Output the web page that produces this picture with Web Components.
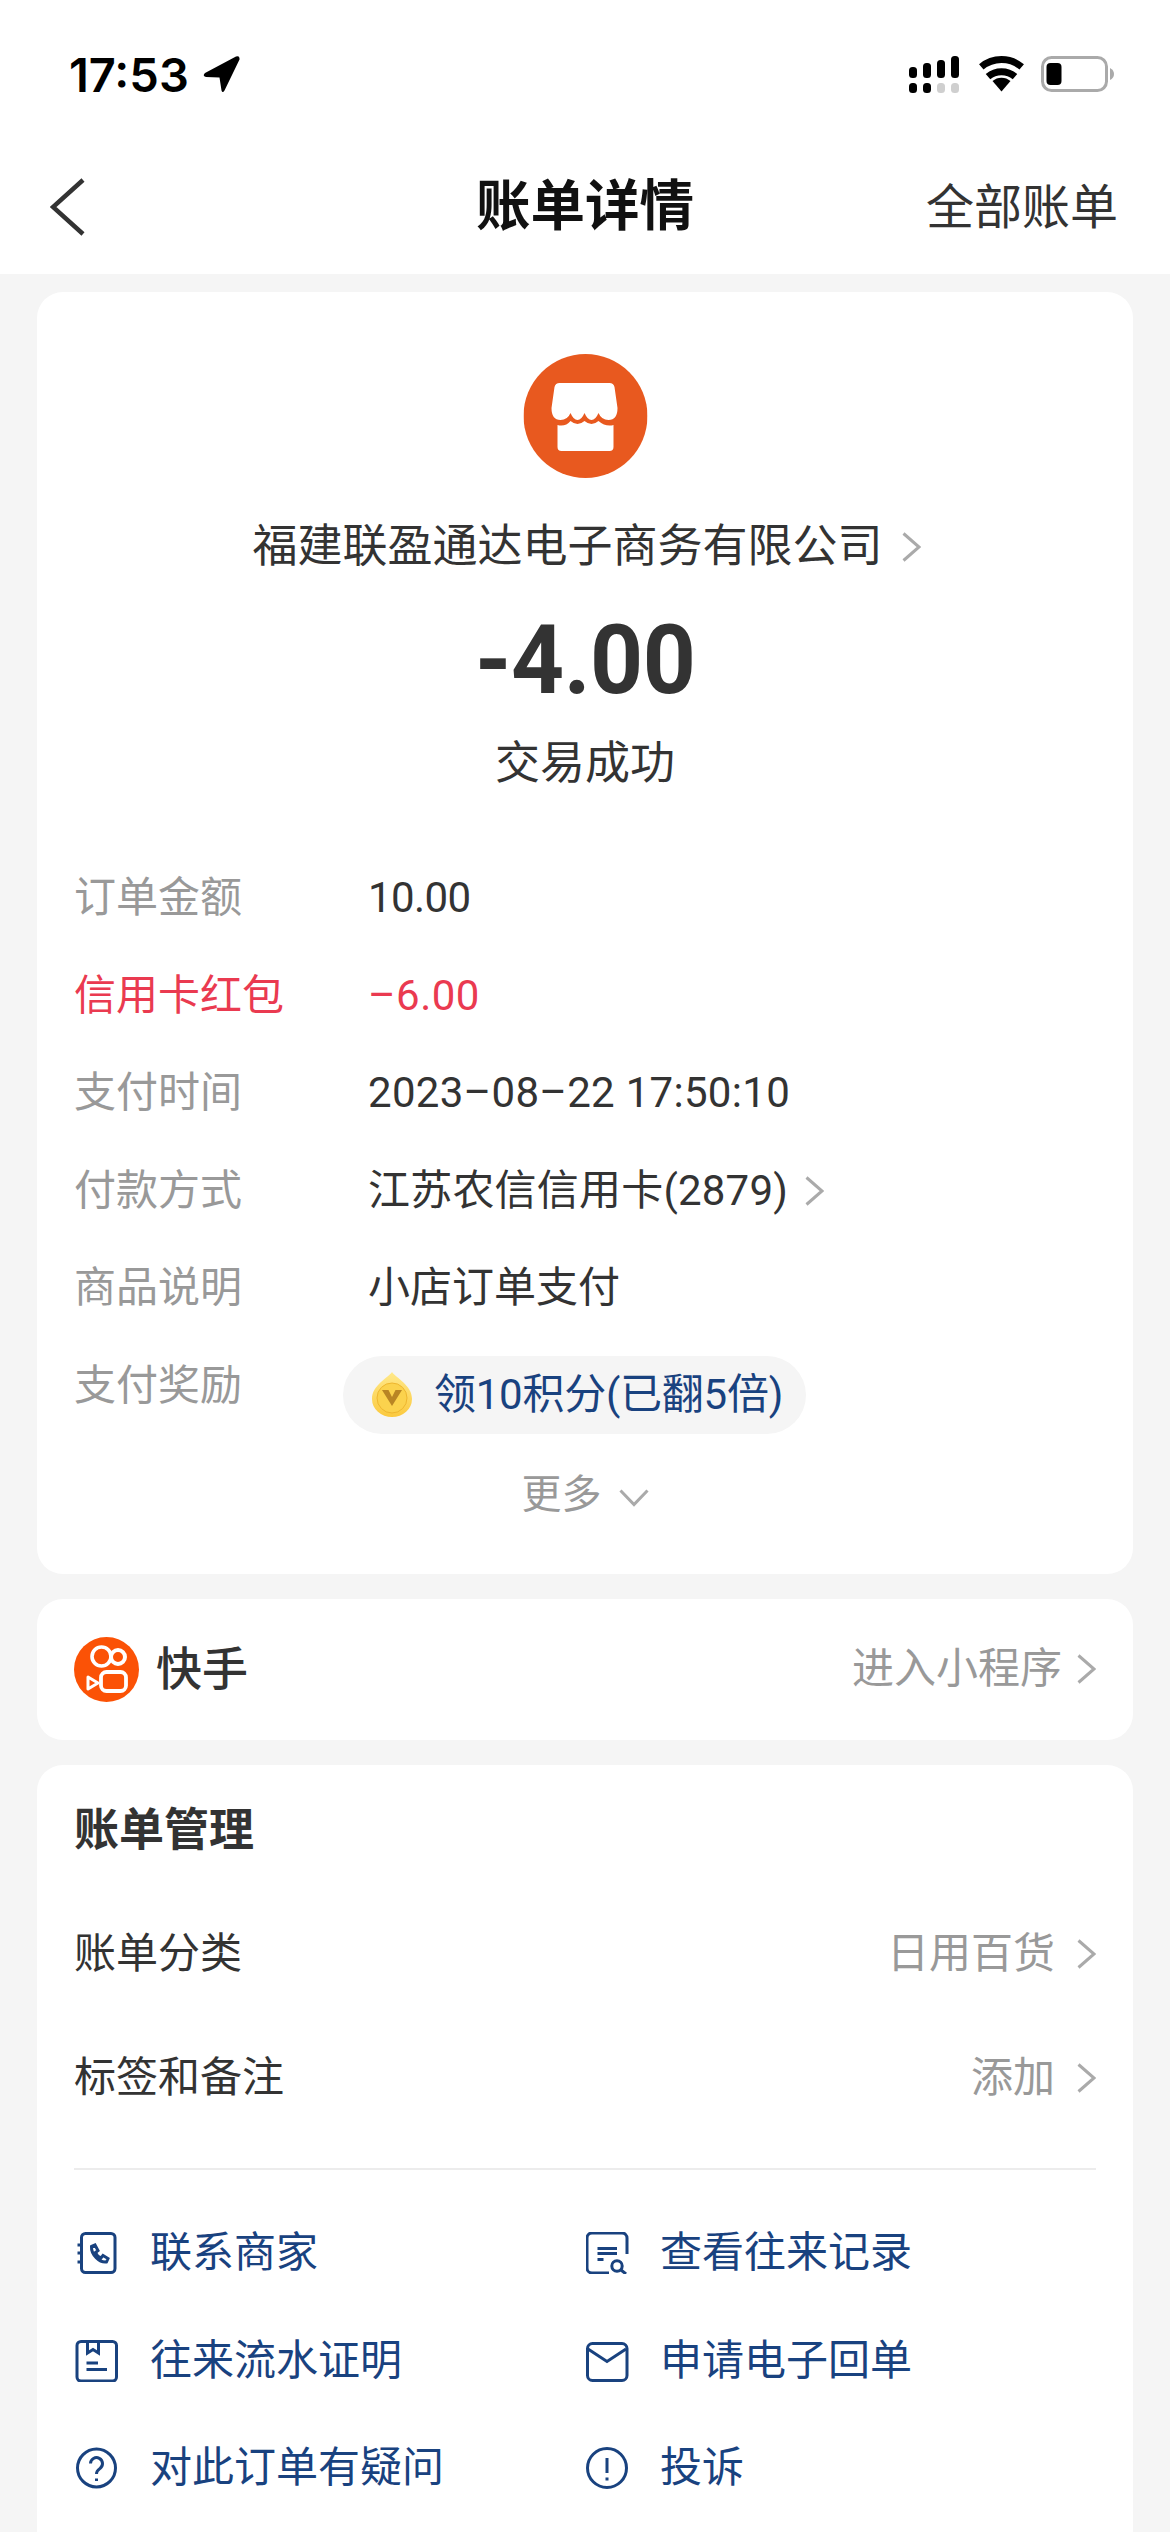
<!DOCTYPE html>
<html lang="zh-CN"><head><meta charset="utf-8"><title>账单详情</title>
<style>
html,body{margin:0;padding:0;width:1170px;height:2532px;overflow:hidden;background:#f5f5f5;}
body{font-family:Roboto,"Noto Sans CJK SC",sans-serif;color:#333;}
</style></head><body>
<bill-app>
  <status-bar></status-bar>
  <nav-bar>账单详情<span slot="right">全部账单</span></nav-bar>
  <bill-card class="c1">
    <merchant-head name="福建联盈通达电子商务有限公司" amount="-4.00" status="交易成功"></merchant-head>
    <kv-row label="订单金额"><span style="letter-spacing:-.6px">10.00</span></kv-row>
    <kv-row label="信用卡红包" tone="red"><span style="letter-spacing:.5px">–6.00</span></kv-row>
    <kv-row label="支付时间"><span style="letter-spacing:.3px">2023–08–22 17:50:10</span></kv-row>
    <kv-row label="付款方式"><span style="letter-spacing:.2px">江苏农信信用卡(2879)</span><chev-icon style="margin-left:16px"></chev-icon></kv-row>
    <kv-row label="商品说明">小店订单支付</kv-row>
    <kv-row label="支付奖励"><reward-pill>领10积分(已翻5倍)</reward-pill></kv-row>
    <more-toggle>更多</more-toggle>
  </bill-card>
  <mini-app-card name="快手" action="进入小程序"></mini-app-card>
  <bill-card class="c3">
    <section-title>账单管理</section-title>
    <manage-row label="账单分类">日用百货</manage-row>
    <manage-row label="标签和备注">添加</manage-row>
    <h-rule></h-rule>
    <action-grid>
      <action-link icon="phone">联系商家</action-link>
      <action-link icon="search" style="gap:30px">查看往来记录</action-link>
      <action-link icon="book">往来流水证明</action-link>
      <action-link icon="mail" style="gap:30px">申请电子回单</action-link>
      <action-link icon="help">对此订单有疑问</action-link>
      <action-link icon="alert" style="gap:30px">投诉</action-link>
    </action-grid>
  </bill-card>
</bill-app>
<script>
const FONT='Roboto,"Noto Sans CJK SC",sans-serif';
function def(name,html){
  customElements.define(name,class extends HTMLElement{
    connectedCallback(){
      if(this.shadowRoot)return;
      const r=this.attachShadow({mode:'open'});
      r.innerHTML=typeof html==='function'?html(this):html;
    }
  });
}
def('bill-app',`<style>:host{display:flex;flex-direction:column;width:1170px;height:2532px;overflow:hidden}
::slotted(*){flex:none}
</style><slot></slot>`);
def('status-bar',`<style>:host{display:flex;justify-content:space-between;align-items:flex-start;height:137px;box-sizing:border-box;padding:56px 55px 0 69px;background:#fff}
.t{display:flex;align-items:center;gap:14px;font:600 47px/37px Inter,sans-serif;color:#000;letter-spacing:0}
svg{display:block}.r{display:flex;gap:16px;align-items:flex-start}
</style>
<div class="t">17:53<svg width="38" height="37" viewBox="0 0 38 37"><path d="M33 .6L2 17Q-1 20 3 21L16.500 21.500L18.500 34.500Q19.500 37.500 21.500 34.500L36.500 3.500Q37 -.6 33 .6Z" fill="#000"/></svg></div>
<div class="r">
<svg width="53" height="37" viewBox="0 0 53 37" fill="#000"><rect x="1" y="11" width="8" height="11" rx="3.500"/><rect x="15" y="7" width="8" height="15" rx="3.500"/><rect x="29" y="4" width="8" height="18" rx="3.500"/><rect x="43" y="0" width="8" height="22" rx="3.500"/><rect x="1" y="27" width="8" height="10" rx="3.500"/><rect x="15" y="27" width="8" height="10" rx="3.500"/><rect x="29" y="27" width="8" height="10" rx="3.500" fill="#cfcfcf"/><rect x="43" y="27" width="8" height="10" rx="3.500" fill="#cfcfcf"/></svg>
<svg width="49" height="36" viewBox="0 0 49 36"><path d="M4.300 10.900A31.500 31.500 0 0 1 44.700 10.900M11 20.600A21 21 0 0 1 38 20.600" fill="none" stroke="#000" stroke-width="7"/><path d="M24.500 35.500L15.500 25A13.700 13.700 0 0 1 33.500 25Z" fill="#000"/></svg>
<svg width="74" height="37" viewBox="0 0 74 37" style="margin-left:-1px"><rect x="1.500" y="1.500" width="64" height="33" rx="9" fill="#fff" stroke="#aaa" stroke-width="3"/><rect x="5.500" y="7" width="15" height="22" rx="4" fill="#000"/><path d="M69 12q4 2 4 6t-4 6z" fill="#aaa"/></svg>
</div>`);
def('nav-bar',`<style>:host{display:flex;align-items:center;justify-content:center;position:relative;height:137px;background:#fff;box-sizing:border-box;font:600 54.500px/70px ${FONT};color:#111}
svg{position:absolute;left:50px;top:41px}
.r{position:absolute;right:52px;top:36px;font:400 48px/70px ${FONT};color:#333}
</style><svg width="36" height="58" viewBox="0 0 36 58"><path d="M33 2L3 29L33 56" fill="none" stroke="#333" stroke-width="4.500"/></svg><div><slot></slot></div><div class="r"><slot name="right"></slot></div>`);
def('bill-card',`<style>:host{display:block;box-sizing:border-box;margin:0 37px;width:1096px;background:#fff;border-radius:26px;padding:0 37px}
:host(.c1){margin-top:18px;padding-top:62px;padding-bottom:49px}
:host(.c3){margin-top:25px;padding-top:36px;height:900px}
</style><slot></slot>`);
def('merchant-head',h=>`<style>:host{display:block;text-align:center;margin-bottom:55px;color:#333}
.logo{display:block;margin:0 auto 35px;width:124px;height:124px;transform:translateX(.5px)}
.n{display:flex;justify-content:center;align-items:center;gap:18px;height:68px;font:400 45px/68px ${FONT};padding-left:3px}
.a{height:110px;margin-top:24px;font:700 96px/110px Roboto,sans-serif;color:#333}
.a span{display:inline-block;transform:scaleX(.965);letter-spacing:-.5px}
.s{height:60px;margin-top:19px;font:400 45px/60px ${FONT}}
</style>
<svg class="logo" viewBox="0 0 124 124"><circle cx="62" cy="62" r="62" fill="#e8591f"/><path fill="#fff" d="M36 29H86Q90 29 91 33L94 54Q94 66 85 66Q78 66 75 59Q72 66 68 66Q64 66 61 59Q58 66 54 66Q50 66 47 59Q44 66 37 66Q28 66 28 54L31 33Q32 29 36 29Z"/><path fill="#fff" d="M34 71Q42 73 47 67Q54 73 61 67Q68 73 75 67Q82 73 90 71V93Q90 97 86 97H38Q34 97 34 93Z"/></svg>
<div class="n">${h.getAttribute('name')}<chev-icon size="lg"></chev-icon></div>
<div class="a"><span>${h.getAttribute('amount')}</span></div>
<div class="s">${h.getAttribute('status')}</div>`);
def('chev-icon',h=>{const d=h.getAttribute('dir');
 if(d==='down')return `<style>:host{display:inline-block;line-height:0}</style><svg width="30" height="18" viewBox="0 0 30 18"><path d="M1.500 1.500L15 15.500L28.500 1.500" fill="none" stroke="#aaa" stroke-width="3"/></svg>`;
 return `<style>:host{display:inline-flex;align-items:center;line-height:0}</style><svg width="20" height="30" viewBox="0 0 20 30"><path d="M2.500 1.500L18 15L2.500 28.500" fill="none" stroke="#aaa" stroke-width="3"/></svg>`});
def('kv-row',h=>{const red=h.getAttribute('tone')==='red';const c=red?'#ea3a50':null;return `<style>:host{display:flex;align-items:flex-start;min-height:97.6px;font:400 42px/97.6px ${FONT}}
.l{width:294px;flex:none;color:${c||'#999'}}.v{display:flex;align-items:center;color:${c||'#333'}}
</style><div class="l">${h.getAttribute('label')}</div><div class="v"><slot></slot></div>`});
def('reward-pill',`<style>:host{display:flex;align-items:center;box-sizing:border-box;height:78px;width:463px;margin:19px 0 0 -25px;padding:0 0 0 28px;background:#f5f5f5;border-radius:39px;font:400 42px/78px ${FONT};color:#19427f;gap:21px;letter-spacing:-.25px}
svg{display:block;flex:none}</style>
<svg width="42" height="45" viewBox="0 0 42 45"><defs><linearGradient id="g" x1="0" y1="0" x2="0" y2="1"><stop offset="0" stop-color="#ffe98a"/><stop offset="1" stop-color="#fbc93e"/></linearGradient></defs><path d="M21 0C25 6 41 13 41 27A20 18 0 0 1 1 27C1 13 17 6 21 0Z" fill="url(#g)"/><circle cx="21" cy="26" r="15" fill="#fbd24d" stroke="#eeb62f" stroke-width="1"/><path d="M11 18H17.500L21 25L24.500 18H31L21 34Z" fill="#b98524"/></svg><slot></slot>`);
def('more-toggle',`<style>:host{display:flex;justify-content:center;align-items:center;gap:17px;height:60px;margin-top:30px;font:400 40px/60px ${FONT};color:#999}
</style><slot></slot><chev-icon dir="down" style="margin-top:6px"></chev-icon>`);
def('mini-app-card',h=>`<style>:host{display:flex;align-items:center;box-sizing:border-box;margin:25px 37px 0;width:1096px;height:141px;padding:0 37px;background:#fff;border-radius:26px}
svg{display:block;flex:none}.n{margin-left:17px;font:500 46px/60px ${FONT};color:#333}
.a{margin-left:auto;font:400 42px/60px ${FONT};color:#999;margin-right:14px}
</style><svg width="65" height="65" viewBox="0 0 65 65"><circle cx="32.500" cy="32.500" r="32.500" fill="#fb5206"/><g fill="none" stroke="#fff"><circle cx="27.500" cy="19.500" r="9.500" stroke-width="3.600"/><circle cx="44" cy="20" r="7" stroke-width="4"/><rect x="27" y="35" width="25" height="19" rx="5.500" stroke-width="3.800"/><path d="M14 40L24 46L14 52Z" stroke-width="3" stroke-linejoin="round"/></g></svg><div class="n">${h.getAttribute('name')}</div><div class="a">${h.getAttribute('action')}</div><chev-icon></chev-icon>`);
def('section-title',`<style>:host{display:block;height:60px;margin-bottom:31px;font:600 45px/60px ${FONT};color:#333}</style><slot></slot>`);
def('manage-row',h=>`<style>:host{display:flex;align-items:center;height:124px;font:400 42px/60px ${FONT};color:#333}
.v{margin-left:auto;margin-right:21px;color:#999}</style><div>${h.getAttribute('label')}</div><div class="v"><slot></slot></div><chev-icon></chev-icon>`);
def('h-rule',`<style>:host{display:block;height:2px;margin-top:28px;background:#ececec}</style>`);
def('action-grid',`<style>:host{display:grid;grid-template-columns:512px 1fr;grid-auto-rows:107.5px;margin-top:30px}</style><slot></slot>`);
const ICONS={
phone:`<rect x="7.500" y="1.500" width="33.500" height="39" rx="4"/><path d="M3.500 13H8M3.500 21H8M3.500 30H8"/><path d="M17.500 14.500l3.500-1.500 3 5.500-2.500 2c1 2.500 3 4.500 5.500 5.500l2-2.500 5 3-1.500 3.500c-7 1-15.500-7.500-15-15.500z"/>`,
book:`<rect x="3" y="1.500" width="39.500" height="39.500" rx="4"/><path d="M13.500 1.500V13L19 9.500L24.500 13V1.500"/><path d="M12.500 23H24M12.500 29.500H33"/>`,
help:`<circle cx="22.500" cy="21" r="19"/><path d="M16.500 16.500a6 6 0 1 1 9.500 5c-2 1.500-3.500 2.500-3.500 5.500"/><path d="M22.500 31.500v2.500"/>`,
search:`<path d="M41 22V6a5 5 0 0 0-5-5H6a5 5 0 0 0-5 5V36a5 5 0 0 0 5 5H23"/><path d="M11.500 16.500H31M11.500 21.500H31M11.500 27.500H17.500"/><circle cx="31" cy="34" r="5.200"/><path d="M35 38l5 4"/>`,
mail:`<rect x="1.500" y="3.500" width="39.500" height="37" rx="5"/><path d="M2 9L21 21.500L40 9"/>`,
alert:`<circle cx="21" cy="21" r="19.500"/><path d="M21 11V26M21 30.500V33.500"/>`};
def('action-link',h=>`<style>:host{display:flex;align-items:center;font:400 42px/60px ${FONT};color:#19427f;gap:32px}
svg{display:block;flex:none;fill:none;stroke:#19427f;stroke-width:3}</style><svg width="44" height="42" viewBox="0 0 44 42">${ICONS[h.getAttribute('icon')]}</svg><div><slot></slot></div>`);
</script>
</body></html>
